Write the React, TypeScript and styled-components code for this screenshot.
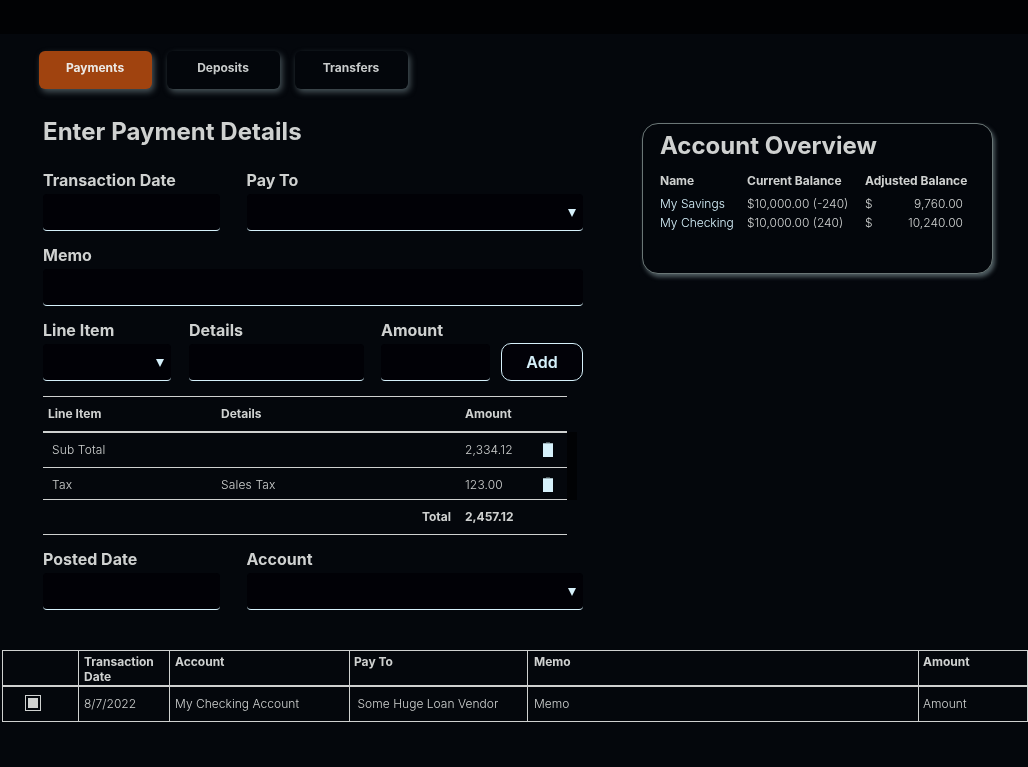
import React from "react";
import styled, { createGlobalStyle } from "styled-components";

const Global = createGlobalStyle`
  html, body { margin: 0; padding: 0; background: #04070c; }
  body { font-family: Inter, "Liberation Sans", sans-serif; color: #cfd1d0; overflow: hidden; }
`;
const Page = styled.div`width: 1028px; height: 767px; overflow: hidden; position: relative; will-change: transform;`;
const TopBar = styled.div`height: 34px; background: #010204;`;
const Tabs = styled.div`display: flex; gap: 15px; padding: 17px 0 0 39px;`;
const Tab = styled.div<{ $active?: boolean }>`
  width: 113px; height: 38px; border-radius: 6px; display: flex; align-items: center; justify-content: center;
  padding: 0 1px 6px 0; box-sizing: border-box; font-size: 12px; font-weight: 700;
  background: ${p => (p.$active ? "#a0430f" : "#03060b")};
  color: ${p => (p.$active ? "#ebe9e6" : "#c8cbcb")};
  box-shadow: 2px 3px 6px rgba(130,150,155,.55);
`;
const Main = styled.div`display: flex; padding-left: 43px;`;
const FormCol = styled.div`width: 540px; flex: none; position: relative;`;
const Title = styled.h1`margin: 0; padding-top: 28px; font-size: 24px; line-height: 30px; font-weight: 700; color: #cfd1d0; letter-spacing: .05px;`;
const Row = styled.div<{ $cols: string; $gap: number }>`display: grid; grid-template-columns: ${p => p.$cols}; margin-top: ${p => p.$gap}px;`;
const Field = styled.div`display: flex; flex-direction: column; min-width: 0;`;
const Label = styled.label`font-size: 16px; line-height: 24px; height: 24px; font-weight: 700; color: #cfd1d0; margin: 3px 0 2px; white-space: nowrap;`;
const Input = styled.div`
  height: 37px; background: #010106; border-bottom: 1px solid #d6f1fb; border-radius: 4px; box-sizing: border-box;
  display: flex; align-items: center; justify-content: flex-end; padding-right: 7px;
`;
const Caret = styled.span`width: 0; height: 0; border-left: 4.5px solid transparent; border-right: 4.5px solid transparent; border-top: 8px solid #d6f1fb; margin-top: 1px;`;
const AddButton = styled.div`
  height: 38px; width: 82px; box-sizing: border-box; align-self: end; border: 1px solid #d6f1fb; border-radius: 10px; background: #020208;
  color: #d6f1fb; font-size: 16px; font-weight: 600; display: flex; align-items: center; justify-content: center;
`;
const LineTable = styled.div`width: 524px; margin-top: 15px; position: relative; border-top: 1px solid #cfd1d0; font-size: 12px;`;
const LineRow = styled.div<{ $h: number; $thick?: boolean; $shift?: number }>`
  display: grid; grid-template-columns: 178px 244px 72px 30px; align-items: center; box-sizing: border-box;
  height: ${p => p.$h}px; border-bottom: ${p => (p.$thick ? 2 : 1)}px solid #cfd1d0;
  padding-top: ${p => (p.$shift && p.$shift > 0 ? p.$shift : 0)}px;
  padding-bottom: ${p => (p.$shift && p.$shift < 0 ? -p.$shift : 0)}px;
`;
const LineHead = styled.div<{ $indent?: number }>`font-weight: 700; color: #cfd1d0; padding-left: ${p => p.$indent ?? 0}px; font-size: 12px;`;
const LineCell = styled.div<{ $indent?: number; $strong?: boolean; $right?: boolean }>`
  font-weight: ${p => (p.$strong ? 700 : 300)}; padding-left: ${p => p.$indent ?? 0}px; color: #cfd1d0; font-size: 12px; white-space: nowrap;
  letter-spacing: ${p => (p.$strong ? 0 : ".15px")};
  ${p => p.$right ? "text-align: right; padding-right: 14px;" : ""}
`;
const TrashCell = styled.div`display: flex; justify-content: flex-start; padding-left: 6px; height: 15px;`;
const Track = styled.div`position: absolute; left: 524px; top: 35px; width: 10px; height: 68px; background: #010204;`;
const SideCard = styled.section`
  margin: 34px 0 0 59px; width: 351px; height: 151px; box-sizing: border-box; border: 1px solid #6a7676; border-radius: 16px;
  background: #03060b; padding: 6px 17px 0; box-shadow: 2px 3px 4px rgba(130,150,155,.6);
`;
const CardTitle = styled.h2`margin: 0; font-size: 24px; line-height: 32px; font-weight: 700; color: #cfd1d0;`;
const CardGrid = styled.div`display: grid; grid-template-columns: 87px 118px 1fr; margin-top: 9px; font-size: 12px; line-height: 19px;`;
const CardHead = styled.div`font-weight: 700; color: #cfd1d0; margin-bottom: 3.5px; font-size: 12px; white-space: nowrap;`;
const CardText = styled.div<{ $blue?: boolean }>`font-weight: 300; color: ${p => (p.$blue ? "#d6f1fb" : "#cfd1d0")}; white-space: nowrap;`;
const Money = styled.div`display: flex; justify-content: space-between; font-weight: 300; width: 98px; color: #cfd1d0;`;
const Ledger = styled.div`
  position: absolute; left: 2px; top: 650px; width: 1026px; box-sizing: border-box; border: 1px solid #cfd1d0;
  font-size: 12px;
`;
const LedgerRow = styled.div<{ $h: number; $thick?: boolean }>`
  display: grid; grid-template-columns: 75px 91px 180px 178px 391px 1fr; height: ${p => p.$h}px; box-sizing: border-box;
  border-bottom: ${p => (p.$thick ? "2px solid #cfd1d0" : "none")};
`;
const LedgerHead = styled.div<{ $indent?: number }>`
  font-weight: 700; font-size: 12px; line-height: 15px; padding: 3px 4px 0 ${p => p.$indent ?? 5}px; border-left: 1px solid #cfd1d0; color: #cfd1d0; &:first-child { border-left: none; }
`;
const LedgerCell = styled.div<{ $indent?: number }>`
  font-weight: 300; display: flex; align-items: center; padding: 0 0 2px ${p => p.$indent ?? 5}px; border-left: 1px solid #cfd1d0; color: #cfd1d0; white-space: nowrap; letter-spacing: .03px;
  &:first-child { border-left: none; padding-left: 22px; }
`;
const Check = styled.div`width: 16px; height: 16px; box-sizing: border-box; border: 1px solid #cfd1d0; padding: 2px; display: flex;
  &::after { content: ""; flex: 1; background: #cfd1d0; }
`;

const Trash = () => (
  <svg width="10" height="15" viewBox="0 0 10 15" aria-hidden="true">
    <path d="M3 0h4v1H3z" fill="#4a565b" />
    <path d="M0 1h10v1H0z" fill="#9fb4bb" />
    <path d="M0 2h10v13H0z" fill="#d6f1fb" />
  </svg>
);

export default function App() {
  return (
    <Page>
      <Global />
      <TopBar />
      <Tabs>
        <Tab $active>Payments</Tab>
        <Tab>Deposits</Tab>
        <Tab>Transfers</Tab>
      </Tabs>
      <Main>
        <FormCol>
          <Title>Enter Payment Details</Title>
          <Row $cols="177px 26.5px 336.5px" $gap={18}>
            <Field><Label>Transaction Date</Label><Input /></Field>
            <span />
            <Field><Label>Pay To</Label><Input><Caret /></Input></Field>
          </Row>
          <Row $cols="540px" $gap={9}>
            <Field><Label>Memo</Label><Input /></Field>
          </Row>
          <Row $cols="128px 18px 175px 17px 109px 11px 82px" $gap={9}>
            <Field><Label>Line Item</Label><Input><Caret /></Input></Field>
            <span />
            <Field><Label>Details</Label><Input /></Field>
            <span />
            <Field><Label>Amount</Label><Input /></Field>
            <span />
            <AddButton>Add</AddButton>
          </Row>
          <LineTable>
            <LineRow $h={36} $thick $shift={-2}>
              <LineHead $indent={5}>Line Item</LineHead>
              <LineHead>Details</LineHead>
              <LineHead>Amount</LineHead>
              <span />
            </LineRow>
            <LineRow $h={35} $shift={-1}>
              <LineCell $indent={9}>Sub Total</LineCell>
              <LineCell />
              <LineCell>2,334.12</LineCell>
              <TrashCell><Trash /></TrashCell>
            </LineRow>
            <LineRow $h={32} $shift={2}>
              <LineCell $indent={9}>Tax</LineCell>
              <LineCell>Sales Tax</LineCell>
              <LineCell>123.00</LineCell>
              <TrashCell><Trash /></TrashCell>
            </LineRow>
            <LineRow $h={35} $shift={-2}>
              <LineCell />
              <LineCell $right $strong>Total</LineCell>
              <LineCell $strong>2,457.12</LineCell>
              <span />
            </LineRow>
            <Track />
          </LineTable>
          <Row $cols="177px 26.5px 336.5px" $gap={9}>
            <Field><Label>Posted Date</Label><Input /></Field>
            <span />
            <Field><Label>Account</Label><Input><Caret /></Input></Field>
          </Row>
        </FormCol>
        <SideCard>
          <CardTitle>Account Overview</CardTitle>
          <CardGrid>
            <CardHead>Name</CardHead>
            <CardHead>Current Balance</CardHead>
            <CardHead>Adjusted Balance</CardHead>
            <CardText $blue>My Savings</CardText>
            <CardText>$10,000.00 (-240)</CardText>
            <Money><span>$</span><span>9,760.00</span></Money>
            <CardText $blue>My Checking</CardText>
            <CardText>$10,000.00 (240)</CardText>
            <Money><span>$</span><span>10,240.00</span></Money>
          </CardGrid>
        </SideCard>
      </Main>
      <Ledger>
        <LedgerRow $h={36} $thick>
          <LedgerHead />
          <LedgerHead>Transaction Date</LedgerHead>
          <LedgerHead>Account</LedgerHead>
          <LedgerHead $indent={4}>Pay To</LedgerHead>
          <LedgerHead $indent={6}>Memo</LedgerHead>
          <LedgerHead $indent={4}>Amount</LedgerHead>
        </LedgerRow>
        <LedgerRow $h={34}>
          <LedgerCell><Check /></LedgerCell>
          <LedgerCell>8/7/2022</LedgerCell>
          <LedgerCell>My Checking Account</LedgerCell>
          <LedgerCell $indent={7.5}>Some Huge Loan Vendor</LedgerCell>
          <LedgerCell $indent={6}>Memo</LedgerCell>
          <LedgerCell $indent={4}>Amount</LedgerCell>
        </LedgerRow>
      </Ledger>
    </Page>
  );
}
